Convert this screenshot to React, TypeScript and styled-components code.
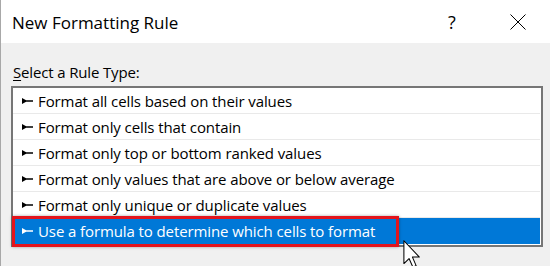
import React from 'react';
import styled, { createGlobalStyle } from 'styled-components';

const GlobalStyle = createGlobalStyle`
  html, body {
    margin: 0;
    padding: 0;
    background: #f0f0f0;
    overflow: hidden;
  }
`;

const Window = styled.div`
  position: relative;
  width: 550px;
  height: 266px;
  box-sizing: border-box;
  border-left: 1px solid #a8a8a8;
  background: #f0f0f0;
  font-family: 'Open Sans', 'Noto Sans', sans-serif;
  color: #000;
  overflow: hidden;
`;

const TitleBar = styled.div`
  display: flex;
  align-items: center;
  height: 43px;
  padding-left: 11px;
  background: #fff;
`;

const Title = styled.div`
  flex: 1;
  font-size: 17px;
  padding-top: 1px;
`;

const HelpButton = styled.div`
  width: 20px;
  margin-right: 48px;
  font-size: 18px;
  text-align: center;
`;

const CloseButton = styled.div`
  display: flex;
  width: 16px;
  height: 16px;
  margin-right: 24px;
`;

const Body = styled.div`
  padding: 0 7px 0 10px;
`;

const Label = styled.div`
  padding: 19px 0 0 2px;
  height: 24px;
  font-size: 15px;
  letter-spacing: -0.15px;
  span {
    text-decoration: underline;
    text-underline-offset: 2px;
  }
`;

const ListBox = styled.div`
  border: 2px solid #767676;
  background: #fff;
  padding: 0 1px 1px 0;
`;

const Row = styled.div<{ selected?: boolean }>`
  position: relative;
  display: flex;
  align-items: center;
  gap: 5px;
  height: 25px;
  padding-left: 9px;
  border-bottom: 1px solid ${(p) => (p.selected ? '#0078d7' : '#e9e9e9')};
  background: ${(p) => (p.selected ? '#0078d7' : '#fff')};
  color: ${(p) => (p.selected ? '#fff' : '#000')};
  font-size: 15px;
  letter-spacing: -0.1px;
  white-space: nowrap;
`;

const Highlight = styled.div`
  position: absolute;
  left: -1px;
  top: -2px;
  width: 387px;
  height: 31px;
  box-sizing: border-box;
  border: 3px solid #e3141c;
  box-shadow: 0 0 3px rgba(0, 0, 0, 0.35);
`;

const Cursor = styled.svg`
  position: absolute;
  left: 402px;
  top: 240px;
`;

function Bullet({ color }: { color: string }) {
  return (
    <svg width="11" height="6" viewBox="0 0 11 6">
      <path d="M0 0 L5.5 3 L0 6 Z M4 2.3 H11 V3.7 H4 Z" fill={color} />
    </svg>
  );
}

const rules = [
  'Format all cells based on their values',
  'Format only cells that contain',
  'Format only top or bottom ranked values',
  'Format only values that are above or below average',
  'Format only unique or duplicate values',
  'Use a formula to determine which cells to format',
];

export default function App() {
  return (
    <Window>
      <GlobalStyle />
      <TitleBar>
        <Title>New Formatting Rule</Title>
        <HelpButton>?</HelpButton>
        <CloseButton>
          <svg width="16" height="16" viewBox="0 0 16 16">
            <path d="M0.5 0.5 L15.5 15.5 M15.5 0.5 L0.5 15.5" stroke="#000" strokeWidth="1" />
          </svg>
        </CloseButton>
      </TitleBar>
      <Body>
        <Label>
          <span>S</span>elect a Rule Type:
        </Label>
        <ListBox>
          {rules.map((r, i) => {
            const selected = i === rules.length - 1;
            return (
              <Row key={r} selected={selected}>
                <Bullet color={selected ? '#fff' : '#000'} />
                {r}
                {selected && <Highlight />}
              </Row>
            );
          })}
        </ListBox>
      </Body>
      <Cursor width="18" height="28" viewBox="0 0 12 19">
        <path d="M0.5 0.5 L0.5 16 L4 12.6 L6.6 18.4 L8.8 17.4 L6.3 11.6 L11 11.6 Z" fill="#fff" stroke="#000" strokeWidth="0.7" strokeLinejoin="round" />
      </Cursor>
    </Window>
  );
}
